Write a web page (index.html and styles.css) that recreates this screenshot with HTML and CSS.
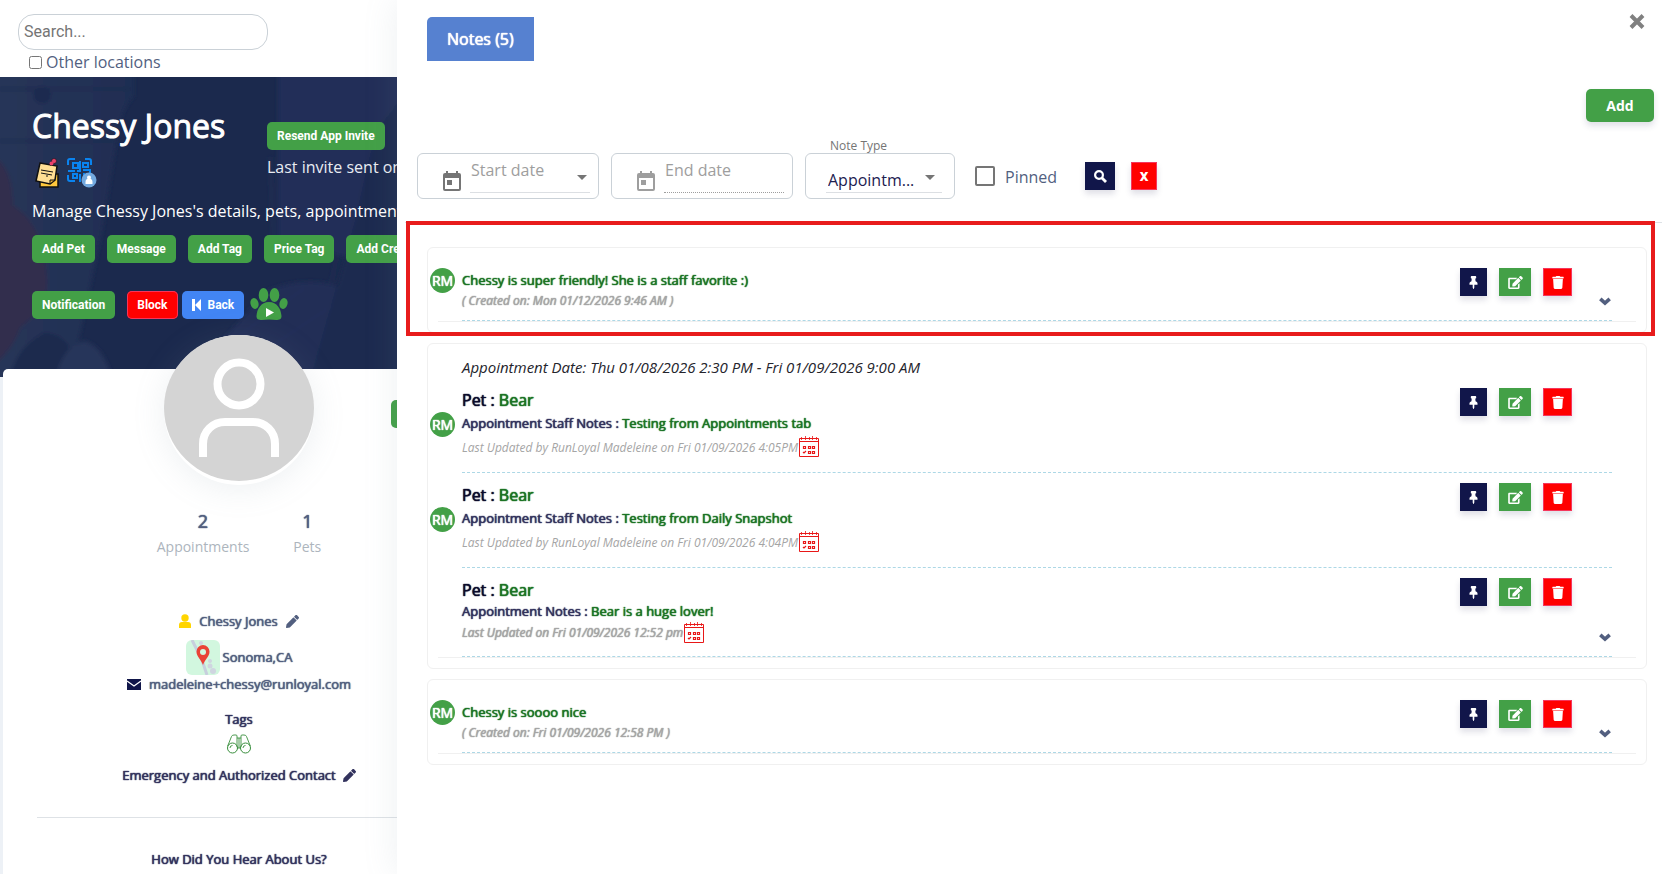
FILE: index.html
```html
<!DOCTYPE html>
<html lang="en">
<head>
<meta charset="utf-8">
<title>Chessy Jones - Notes</title>
<link rel="stylesheet" href="styles.css">
</head>
<body>
<svg class="sprite" aria-hidden="true">
  <symbol id="pin" viewBox="0 0 384 512"><path d="M298 28C299 10 285 0 270 0H114C99 0 86 10 86 28v50c0 9 7 17 16 17h20l-10 113C58 232 32 262 32 320c0 13 10 24 24 24h104v104l24 60c3 6 13 6 16 0l24-60V344h104c14 0 24-11 24-24 0-58-26-88-80-112L262 95h20c9 0 16-8 16-17z"/></symbol>
  <symbol id="edit" viewBox="0 0 576 512"><path d="M402.600 83.200l90.200 90.200c3.800 3.800 3.800 10 0 13.800L274.400 405.600l-92.800 10.300c-12.400 1.400-22.900-9.100-21.500-21.500l10.300-92.800L388.800 83.200c3.800-3.800 10-3.800 13.800 0zm162-22.900l-48.800-48.800c-15.200-15.200-39.900-15.200-55.200 0l-35.400 35.400c-3.800 3.800-3.800 10 0 13.800l90.200 90.200c3.800 3.800 10 3.800 13.800 0l35.400-35.400c15.200-15.300 15.200-40 0-55.200zM384 346.200V448H64V128h229.800c3.200 0 6.200-1.300 8.500-3.500l40-40c7.600-7.600 2.200-20.500-8.500-20.500H48C21.500 64 0 85.500 0 112v352c0 26.500 21.500 48 48 48h352c26.500 0 48-21.500 48-48V306.200c0-10.700-12.900-16-20.500-8.500l-40 40c-2.200 2.300-3.500 5.300-3.500 8.500z"/></symbol>
  <symbol id="trash" viewBox="0 0 448 512"><path d="M432 32H312l-9-19A24 24 0 0 0 281 0H167a24 24 0 0 0-22 13l-9 19H16A16 16 0 0 0 0 48v32a16 16 0 0 0 16 16h416a16 16 0 0 0 16-16V48a16 16 0 0 0-16-16zM32 120l21 347a48 48 0 0 0 48 45h246a48 48 0 0 0 48-45l21-347z"/></symbol>
  <symbol id="chev" viewBox="0 0 12 9"><path d="M1.300 1.800L6 6l4.700-4.200" fill="none" stroke="currentColor" stroke-width="3.600"/></symbol>
  <symbol id="pencil" viewBox="0 0 512 512"><path d="M498 142l-46 46c-5 5-13 5-17 0L324 77c-5-5-5-12 0-17l46-46c19-19 49-19 68 0l60 60c19 19 19 49 0 68zM285 99L22 362 0 484c-3 16 12 30 28 28l122-22 263-262c5-5 5-12 0-17L302 99c-5-5-13-5-17 0z"/></symbol>
  <symbol id="cal" viewBox="0 0 20 21"><g fill="none" stroke="#e81717"><path d="M.5 2.500h19v18H.5zM.5 5.500h19"/><path d="M2.500 1v3M6.500 0v4M10.500 1v3M13.500 0v4M17.500 1v3" stroke-width=".8"/><path d="M4.500 10.500h2v2h-2zM9.500 10.500h2v2h-2zM13.500 10.500h2v2h-2zM9.500 15.500h2v2h-2zM13.500 15.500h2v2h-2zM4 16l1 1 2-2" stroke-width="1.200"/></g></symbol>
  <symbol id="date" viewBox="0 0 18 20"><path fill-rule="evenodd" d="M2 2h1V0h2v2h8V0h2v2h1a2 2 0 0 1 2 2v14a2 2 0 0 1-2 2H2a2 2 0 0 1-2-2V4a2 2 0 0 1 2-2zm0 5v11h14V7zM4 9h5v5H4z"/></symbol>
</svg>

<div class="page">
  <aside class="customer">
    <form class="finder">
      <input class="finder-input" type="text" placeholder="Search..." aria-label="Search">
      <label class="finder-check"><input type="checkbox">Other locations</label>
    </form>

    <header class="banner">
      <svg class="banner-art" viewBox="0 0 397 300" preserveAspectRatio="xMinYMin slice" aria-hidden="true">
        <defs><filter id="soft" x="-20%" y="-20%" width="140%" height="140%"><feGaussianBlur stdDeviation="2"/></filter><linearGradient id="wall" x1="0" x2="1"><stop offset="0" stop-color="#283659"/><stop offset="1" stop-color="#1f2d52"/></linearGradient></defs>
        <rect width="397" height="300" fill="#1b294d"/>
        <g filter="url(#soft)">
          <path d="M-9-9h143v28q-12 12-16 36l-16 100-26 120-20 30h-70z" fill="url(#wall)"/>
          <path d="M0 64h118M0 12h130" stroke="#1f2c50" stroke-width="3"/>
          <circle cx="42" cy="18" r="9" fill="#1f2c50"/>
          <path d="M-9 78q22 10 22 50 30 18 34 70 4 32-26 52-8 24-30 40z" fill="#302e4e"/>
          <path d="M10 300q8-32 34-44 20 0 28 20l-10 30z" fill="#1c294d"/>
          <path d="M56 300q6-30 28-36 18 4 28 36z" fill="#28345a"/>
          <path d="M278-9h130v40c-40 20-40 80-60 150l-70-20z" fill="#222f58"/>
          <path d="M190 300l76-86q40-16 74-4l-28 90z" fill="#202e56"/>
          <path d="M196 290l110-80M240 290l90-60M270 80l4 100" stroke="#2a3860" stroke-width="1"/>
          <path d="M408 20c-40 20-38 76-60 150l-40 140h100z" fill="#1c2950"/>
          <path d="M397 30c-34 24-36 80-58 140l-26 120" fill="none" stroke="#253259"/>
        </g>
      </svg>
      <div class="banner-body">
        <div class="identity">
          <div class="identity-main">
            <h1 class="name">Chessy Jones</h1>
            <div class="badges">
              <svg width="24" height="30" viewBox="0 0 24 30" aria-hidden="true"><path d="M5 16h18v13H5z" fill="#ffc83d" stroke="#111" stroke-width="1.500"/><path d="M5 5l17 3-2 14-5 4L1 23z" fill="#ffdf94" stroke="#111" stroke-width="1.500"/><path d="M15 26l0-4 5 0z" fill="#f4b93a" stroke="#111"/><path d="M6 12l12 2M6 15l11 2M11 18l2 0" stroke="#111" stroke-width="1"/><path d="M15 7l4-4" stroke="#111" stroke-width="3"/><circle cx="19" cy="3" r="2.500" fill="#e8416b" stroke="#111" stroke-width=".6"/><circle cx="16.500" cy="5.500" r="2" fill="#e8416b"/></svg>
              <svg width="30" height="30" viewBox="0 0 30 30" aria-hidden="true"><g fill="none" stroke="#0a84f0" stroke-width="2"><path d="M1 7V3q0-2 2-2h5M18 1h4q2 0 2 2v4M1 17v4q0 2 2 2h5"/><path d="M6 5h5v5H6zM16 5h5v4h-5zM6 16h4v4H6zM13 3v10h-3M1 13h7M16 12h7v3M13 16v8M17 15v4"/></g><circle cx="22" cy="22" r="7.500" fill="#73a9df"/><circle cx="22" cy="19.500" r="2" fill="#fff"/><path d="M18.500 26v-2a3.500 3.500 0 0 1 7 0v2z" fill="#fff"/></svg>
            </div>
          </div>
          <div class="identity-invite">
            <button class="btn" type="button">Resend App Invite</button>
            <p class="invite-text">Last invite sent on</p>
          </div>
        </div>
        <p class="summary">Manage Chessy Jones's details, pets, appointments</p>
        <div class="btn-row btn-row-a">
          <button class="btn" type="button">Add Pet</button>
          <button class="btn" type="button">Message</button>
          <button class="btn" type="button">Add Tag</button>
          <button class="btn" type="button">Price Tag</button>
          <button class="btn" type="button">Add Credit</button>
        </div>
        <div class="btn-row btn-row-b">
          <button class="btn btn-notify" type="button">Notification</button>
          <button class="btn btn-red" type="button">Block</button>
          <button class="btn btn-blue" type="button"><svg width="9" height="12" viewBox="0 0 9 12" aria-hidden="true"><path d="M0 0h3v12H0zM9 0v12L3 6z" fill="#fff"/></svg>Back</button>
          <svg class="paw" width="38" height="33" viewBox="0 0 38 33" aria-hidden="true"><g fill="#43a047"><ellipse cx="4.500" cy="15.500" rx="4" ry="5.500" transform="rotate(-15 4.500 15.500)"/><ellipse cx="13.500" cy="7" rx="4.800" ry="7"/><ellipse cx="24.500" cy="7" rx="4.800" ry="7"/><ellipse cx="33.500" cy="15.500" rx="4" ry="5.500" transform="rotate(15 33.500 15.500)"/><path d="M19 14c8 0 12 7 12.500 14 0 5-5 4-12.500 3.500-7.500.5-12.500 1.500-12.500-3.500C7 21 11 14 19 14z"/></g><path d="M16 20l8 4.500-8 4.500z" fill="#fff"/></svg>
        </div>
      </div>
    </header>

    <main class="profile">
      <div class="portrait">
        <svg width="150" height="146" viewBox="0 0 150 146" role="img" aria-label="Customer"><ellipse cx="75" cy="73" rx="75" ry="73" fill="#d4d4d4"/><g fill="none" stroke="#fff" stroke-width="8"><circle cx="75" cy="49" r="21.500"/><path d="M39 122v-13c0-13 10-22 22-22h28c12 0 22 9 22 22v13"/></g></svg>
      </div>
      <button class="btn profile-action" type="button">Add</button>
      <dl class="stats">
        <div class="stat"><dt>Appointments</dt><dd>2</dd></div>
        <div class="stat"><dt>Pets</dt><dd>1</dd></div>
      </dl>
      <p class="line line-name"><svg width="12" height="14" viewBox="0 0 12 14" aria-hidden="true"><g fill="#ffd500"><circle cx="6" cy="4" r="3.700"/><path d="M0 14v-3q0-3 3-3h6q3 0 3 3v3z"/></g></svg><span>Chessy Jones</span><svg class="ink" width="13" height="13" aria-hidden="true"><use href="#pencil"/></svg></p>
      <p class="line line-place"><svg width="34" height="35" viewBox="0 0 34 35" aria-hidden="true"><rect width="34" height="35" rx="6" fill="#d2f7df"/><path d="M6 0l10 20 5 15" fill="none" stroke="#c7cfdd" stroke-width="3"/><g fill="#cfd5e0"><circle cx="15" cy="3" r="2"/><circle cx="24" cy="21" r="2"/><circle cx="24" cy="26" r="2.500"/><circle cx="27" cy="31" r="3"/></g><path d="M17 25c-2-6-6.500-8-6.500-13.500a6.500 6.500 0 0 1 13 0C23.500 17 19 19 17 25z" fill="#ea4335"/><circle cx="17" cy="12" r="3" fill="#d2f7df"/></svg><span class="place">Sonoma,CA</span></p>
      <p class="line line-mail"><svg width="14" height="11" viewBox="0 0 14 11" aria-hidden="true"><path d="M0 0h14v11H0z" fill="#11164a"/><path d="M0 2l7 5 7-5" fill="none" stroke="#fff" stroke-width="1.300"/></svg><span>madeleine+chessy@runloyal.com</span></p>
      <h2 class="heading heading-tags">Tags</h2>
      <svg class="binoculars" width="24" height="20" viewBox="0 0 24 20" aria-hidden="true"><g fill="none" stroke="#388e3c"><circle cx="5.500" cy="14" r="5"/><circle cx="18.500" cy="14" r="5"/><path d="M.7 12L4.500 2.500Q5 1 7 1h2q1 0 1 1v11M23.300 12L19.500 2.500Q19 1 17 1h-2q-1 0-1 1v11M10 4h4M10 14h4M3 14q0-2.500 2.500-2.500M16 14q0-2.500 2.500-2.500M12 4v10" stroke-width=".9"/></g></svg>
      <h2 class="heading heading-contact">Emergency and Authorized Contact<svg class="ink" width="13" height="13" aria-hidden="true"><use href="#pencil"/></svg></h2>
      <hr class="rule">
      <h2 class="heading">How Did You Hear About Us?</h2>
    </main>
  </aside>

  <section class="drawer">
    <div class="drawer-top">
      <button class="tab" type="button">Notes (5)</button>
      <button class="close" type="button" aria-label="Close"><svg width="16" height="15" viewBox="0 0 16 15"><path d="M2 1.500l12 12M14 1.500l-12 12" stroke="#808080" stroke-width="4"/></svg></button>
    </div>
    <div class="add-row"><button class="add" type="button">Add</button></div>

    <form class="filters">
      <div class="field">
        <svg class="field-icon" width="18" height="20" aria-hidden="true"><use href="#date"/></svg>
        <div class="field-line"><input class="field-input" type="text" placeholder="Start date" aria-label="Start date"><span class="caret"></span></div>
      </div>
      <div class="field field-off">
        <svg class="field-icon" width="18" height="20" aria-hidden="true"><use href="#date"/></svg>
        <div class="field-line"><input class="field-input" type="text" placeholder="End date" aria-label="End date" disabled></div>
      </div>
      <div class="field field-type">
        <label class="type-label" for="type">Note Type</label>
        <div class="field-line"><select class="type-select" id="type"><option>Appointm...</option></select><span class="caret"></span></div>
      </div>
      <label class="pinned"><input class="pinned-box" type="checkbox"><span class="pinned-text">Pinned</span></label>
      <button class="square square-search" type="button" aria-label="Search"><svg width="13" height="13" viewBox="0 0 13 13"><circle cx="5" cy="5" r="3.900" fill="none" stroke="#fff" stroke-width="2.200"/><path d="M8 8l4 4" stroke="#fff" stroke-width="2.800"/></svg></button>
      <button class="square square-clear" type="button">X</button>
    </form>

    <div class="notes">
      <div class="highlight"></div>
      <article class="card">
        <div class="card-inner">
          <div class="note">
            <span class="avatar">RM</span>
            <div class="note-body"><p class="note-text note-plain">Chessy is super friendly! She is a staff favorite :)</p><p class="meta strong meta-created">( Created on: Mon 01/12/2026 9:46 AM )</p></div>
            <div class="actions"><button class="square a-pin" type="button" aria-label="Pin"><svg width="11" height="13"><use href="#pin"/></svg></button><button class="square a-edit" type="button" aria-label="Edit"><svg width="15" height="13"><use href="#edit"/></svg></button><button class="square a-trash" type="button" aria-label="Delete"><svg width="12" height="13"><use href="#trash"/></svg></button></div>
            <button class="expand" type="button" aria-label="Expand"><svg width="12" height="9"><use href="#chev"/></svg></button>
          </div>
        </div>
      </article>

      <article class="card">
        <div class="card-inner">
          <p class="appt">Appointment Date: Thu 01/08/2026 2:30 PM - Fri 01/09/2026 9:00 AM</p>
          <div class="note">
            <span class="avatar avatar-low">RM</span>
            <div class="note-body"><h3 class="pet">Pet : <span class="green">Bear</span></h3><p class="note-text">Appointment Staff Notes : <span class="green">Testing from Appointments tab</span></p><p class="meta">Last Updated by RunLoyal Madeleine on Fri 01/09/2026 4:05PM<svg width="20" height="21" aria-hidden="true"><use href="#cal"/></svg></p></div>
            <div class="actions"><button class="square a-pin" type="button" aria-label="Pin"><svg width="11" height="13"><use href="#pin"/></svg></button><button class="square a-edit" type="button" aria-label="Edit"><svg width="15" height="13"><use href="#edit"/></svg></button><button class="square a-trash" type="button" aria-label="Delete"><svg width="12" height="13"><use href="#trash"/></svg></button></div>
          </div>
          <div class="note">
            <span class="avatar avatar-low">RM</span>
            <div class="note-body"><h3 class="pet">Pet : <span class="green">Bear</span></h3><p class="note-text">Appointment Staff Notes : <span class="green">Testing from Daily Snapshot</span></p><p class="meta">Last Updated by RunLoyal Madeleine on Fri 01/09/2026 4:04PM<svg width="20" height="21" aria-hidden="true"><use href="#cal"/></svg></p></div>
            <div class="actions"><button class="square a-pin" type="button" aria-label="Pin"><svg width="11" height="13"><use href="#pin"/></svg></button><button class="square a-edit" type="button" aria-label="Edit"><svg width="15" height="13"><use href="#edit"/></svg></button><button class="square a-trash" type="button" aria-label="Delete"><svg width="12" height="13"><use href="#trash"/></svg></button></div>
          </div>
          <div class="note">
            <div class="note-body"><h3 class="pet">Pet : <span class="green">Bear</span></h3><p class="note-text note-tight">Appointment Notes : <span class="green">Bear is a huge lover!</span></p><p class="meta strong">Last Updated on Fri 01/09/2026 12:52 pm<svg width="20" height="21" aria-hidden="true"><use href="#cal"/></svg></p></div>
            <div class="actions"><button class="square a-pin" type="button" aria-label="Pin"><svg width="11" height="13"><use href="#pin"/></svg></button><button class="square a-edit" type="button" aria-label="Edit"><svg width="15" height="13"><use href="#edit"/></svg></button><button class="square a-trash" type="button" aria-label="Delete"><svg width="12" height="13"><use href="#trash"/></svg></button></div>
            <button class="expand" type="button" aria-label="Expand"><svg width="12" height="9"><use href="#chev"/></svg></button>
          </div>
        </div>
      </article>

      <article class="card">
        <div class="card-inner">
          <div class="note">
            <span class="avatar">RM</span>
            <div class="note-body"><p class="note-text note-plain">Chessy is soooo nice</p><p class="meta strong meta-created">( Created on: Fri 01/09/2026 12:58 PM )</p></div>
            <div class="actions"><button class="square a-pin" type="button" aria-label="Pin"><svg width="11" height="13"><use href="#pin"/></svg></button><button class="square a-edit" type="button" aria-label="Edit"><svg width="15" height="13"><use href="#edit"/></svg></button><button class="square a-trash" type="button" aria-label="Delete"><svg width="12" height="13"><use href="#trash"/></svg></button></div>
            <button class="expand" type="button" aria-label="Expand"><svg width="12" height="9"><use href="#chev"/></svg></button>
          </div>
        </div>
      </article>
    </div>
  </section>
</div>
</body>
</html>
```
FILE: styles.css
```css
* { box-sizing: border-box; }
body { margin: 0; font-family: "Open Sans", "Noto Sans", sans-serif; font-size: 16px; color: #525f7f; background: #fff; overflow: hidden; }
h1, h2, h3, p, dl, dd, dt { margin: 0; font-weight: 400; }
button, input, select { font-family: inherit; }
button { border: 0; padding: 0; background: none; cursor: pointer; }
svg { display: block; fill: currentColor; flex: none; }
.sprite { position: absolute; width: 0; height: 0; }

.stat dd, .line, .heading, .tab, .avatar, .pet, .note-text, .strong { text-shadow: 0 0 1px currentColor, 0 0 1px currentColor; }

.page { display: grid; grid-template-columns: 397px 1fr; height: 100vh; }

/* Customer column */
.customer { overflow: hidden; white-space: nowrap; background: #edf1f6; display: flex; flex-direction: column; }
.finder { flex: none; height: 77px; padding: 14px 18px 0; background: #fff; }
.finder-input { display: block; width: 250px; height: 36px; padding: 0 5px 2px; border: 1px solid #cad1d7; border-radius: 16px; font-family: Roboto, sans-serif; font-size: 16px; color: #525f7f; outline: 0; }
.finder-input::placeholder { color: #757575; }
.finder-check { display: flex; align-items: center; gap: 4px; height: 24px; padding-left: 11px; }
.finder-check input { width: 13px; height: 13px; margin: 0; }

.banner { position: relative; flex: none; height: 300px; background: #1b2a4d; color: #fff; }
.banner-art { position: absolute; inset: 0; width: 100%; height: 100%; }
.banner-body { position: relative; padding: 27px 0 0 32px; }
.identity { display: grid; grid-template-columns: 235px auto; height: 94px; }
.name { font-size: 32px; line-height: 44px; -webkit-text-stroke: 1px #fff; }
.badges { display: flex; gap: 8px; padding: 10px 3px 0; }
.identity-invite { padding-top: 18px; }
.invite-text { line-height: 22px; padding-top: 6px; color: #e9ecf2; }
.summary { line-height: 24px; padding-top: 1px; }
.btn { height: 28px; padding: 0 10px; border-radius: 5px; background: #43a047; color: #fff; font-family: Roboto, sans-serif; font-size: 12px; font-weight: 700; line-height: 28px; flex: none; }
.btn-row { display: flex; gap: 12px; }
.btn-row-a { padding-top: 12px; }
.btn-row-b { padding-top: 28px; gap: 4px; }
.btn-notify { margin-right: 8px; }
.btn-red { background: #f00; box-shadow: inset 0 0 0 1px #f5365c; }
.btn-blue { display: flex; align-items: center; gap: 7px; background: #4285f4; }
.paw { margin: -3px 0 0 2px; }

.profile { position: relative; flex: 1 0 auto; width: 472px; margin: -8px 0 0 3px; background: #fff; border-radius: 5px 0 0 0; }
.portrait { width: 150px; height: 150px; margin: -34px auto 0; border-radius: 50%; background: #fff; box-shadow: 0 4px 32px rgba(136, 152, 170, .15); }
.profile-action { position: absolute; top: 31px; left: 388px; width: 60px; }
.stats { display: flex; justify-content: center; gap: 44px; padding-top: 23px; }
.stat { display: flex; flex-direction: column-reverse; text-align: center; }
.stat dd { font-size: 18px; line-height: 26px; padding-bottom: 1px; }
.stat dt { font-size: 14px; line-height: 24px; color: #adb5bd; }
.line { display: flex; align-items: center; justify-content: center; gap: 8px; font-size: 13px; line-height: 20px; }
.line-name { padding-top: 52px; }
.line-place { padding-top: 9px; gap: 3px; }
.place { padding-bottom: 2px; }
.line-mail { line-height: 18px; }
.heading { display: flex; align-items: center; justify-content: center; gap: 7px; color: #32325d; font-size: 13px; line-height: 20px; }
.heading-tags { padding-top: 16px; }
.binoculars { margin: 5px auto 11px; }
.rule { margin: 32px 0 31px 34px; border: 0; border-top: 1px solid #dee2e6; }

/* Notes drawer */
.drawer { position: relative; background: #fff; box-shadow: 0 0 32px rgba(136, 152, 170, .15); min-width: 0; }
.drawer-top { display: flex; justify-content: space-between; align-items: flex-start; padding: 0 22px 0 30px; }
.tab { margin-top: 17px; height: 44px; padding: 0 20px; background: #5681d0; color: #fff; border-radius: 5px 0 0 0; font-size: 16px; }
.close { padding-top: 14px; }
.add-row { display: flex; justify-content: flex-end; padding: 28px 13px 0 0; }
.add { width: 68px; height: 33px; padding-bottom: 1px; border-radius: 5px; background: #43a047; color: #fff; font-size: 14px; font-weight: 700; box-shadow: 0 4px 6px rgba(50, 50, 93, .15); }
.filters { display: flex; align-items: center; padding: 31px 0 0 20px; }
.field { position: relative; display: flex; gap: 9px; width: 182px; height: 46px; margin-right: 12px; padding: 0 8px 5px 25px; border: 1px solid #cad1d7; border-radius: 6px; }
.field-icon { margin-top: 17px; color: #757575; }
.field-line { flex: 1; min-width: 0; display: flex; align-items: center; border-bottom: 1px solid #dcdfe3; }
.field-input { flex: 1; min-width: 0; height: 30px; margin-bottom: 6px; padding: 0 1px; border: 0; background: none; font-size: 16px; outline: 0; }
.field-input::placeholder { color: #9e9e9e; }
.field-off .field-line { border-bottom: 1px dotted #9e9e9e; }
.field-off .field-icon { color: #9e9e9e; }
.caret { flex: none; margin: 9px 3px 0 0; border: 5px solid transparent; border-top-color: #757575; border-bottom: 0; }
.field-type { width: 150px; margin-right: 20px; padding: 0 12px 5px 20px; }
.type-label { position: absolute; top: -17px; left: 24px; font-size: 12px; line-height: 18px; color: #757575; }
.type-select { flex: 1; min-width: 0; height: 26px; margin-top: 14px; padding: 0 2px; border: 0; background: none; appearance: none; color: #1c2050; font-size: 16px; }
.field-type .caret { margin-right: 7px; }
.pinned { display: flex; align-items: center; gap: 10px; width: 110px; }
.pinned-text { padding-top: 2px; }
.pinned-box { appearance: none; width: 20px; height: 20px; margin: 0; border: 2px solid #757575; border-radius: 2px; }
.square { display: flex; align-items: center; justify-content: center; height: 28px; color: #fff; box-shadow: 0 4px 6px rgba(50, 50, 93, .15); }
.square-search { width: 30px; background: #11164a; }
.square-clear { width: 26px; margin-left: 16px; background: #f00; border: 1px solid #f5365c; font-size: 12px; font-weight: 800; }

.notes { position: relative; display: grid; gap: 10px; margin: 23px 5px 0 8px; padding: 24px 15px 0 22px; border-top: 1px solid #dee2e6; }
.highlight { position: absolute; top: -2px; left: 1px; right: 7px; height: 115px; border: 4px solid #e81c1c; pointer-events: none; z-index: 1; }
.card { padding: 10px; border: 1px solid #f0f0f0; border-radius: 6px; }
.card-inner { padding: 0 24px; border-bottom: 1px solid #f0f0f0; }
.note { display: flex; align-items: flex-start; padding-top: 10px; border-bottom: 1px dashed #add8e6; }
.avatar { flex: none; width: 25px; height: 25px; margin: 0 7px 0 -32px; border-radius: 50%; background: #43a047; color: #fff; font-size: 14px; line-height: 25px; text-align: center; }
.avatar-low { margin-top: 24px; }
.note-body { flex: 1; padding-bottom: 10px; }
.pet { color: #0b0b2b; font-size: 16px; line-height: 24px; }
.note-text { color: #32325d; font-size: 13px; line-height: 22px; }
.note-tight { line-height: 18px; }
.note-plain { line-height: 24px; color: #1b7324; }
.green { color: #1b7324; }
.meta { display: flex; align-items: flex-start; gap: 1px; font-size: 12px; font-style: italic; line-height: 28px; color: #a5a5a5; }
.meta svg { margin-top: 2px; }
.meta.strong { line-height: 26px; }
.meta.meta-created { line-height: 18px; }
.appt { height: 24px; color: #24242c; font-size: 15px; font-style: italic; line-height: 26px; }
.actions { display: flex; gap: 12px; margin-right: 40px; }
.a-pin { width: 27px; background: #11164a; }
.a-edit { width: 32px; background: #43a047; }
.a-trash { width: 29px; background: #f00; border: 1px solid #f5365c; }
.expand { align-self: flex-end; margin: 0 1px 14px -13px; color: #525f7f; }
```
